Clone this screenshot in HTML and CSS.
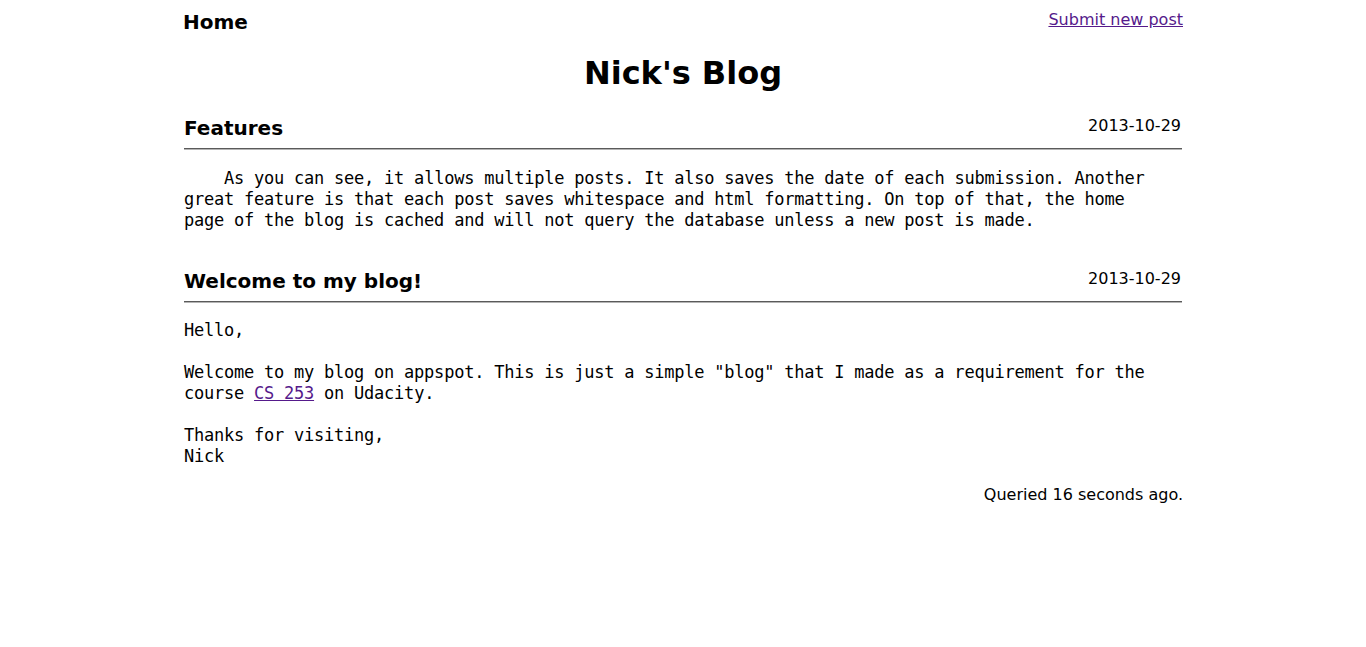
FILE: index.html
```html
<!DOCTYPE html>
<html lang="en">
<head>
<meta charset="utf-8">
<title>Nick's Blog</title>
<link rel="stylesheet" href="styles.css">
</head>
<body>
<div class="page">
  <div class="topbar">
    <a class="home" href="#">Home</a>
    <a class="submit" href="#">Submit new post</a>
  </div>
  <h1 class="blog-title">Nick's Blog</h1>

  <div class="post">
    <div class="post-head">
      <div class="post-title">Features</div>
      <div class="post-date">2013-10-29</div>
    </div>
    <hr class="post-rule">
    <pre class="post-body">    As you can see, it allows multiple posts. It also saves the date of each submission. Another great feature is that each post saves whitespace and html formatting. On top of that, the home page of the blog is cached and will not query the database unless a new post is made.</pre>
  </div>

  <div class="post">
    <div class="post-head">
      <div class="post-title">Welcome to my blog!</div>
      <div class="post-date">2013-10-29</div>
    </div>
    <hr class="post-rule">
    <pre class="post-body">Hello,

Welcome to my blog on appspot. This is just a simple "blog" that I made as a requirement for the course <a class="inline-link" href="#">CS 253</a> on Udacity.

Thanks for visiting,
Nick</pre>
  </div>

  <div class="footer">Queried 16 seconds ago.</div>
</div>
</body>
</html>
```

FILE: styles.css
```css
html, body {
  margin: 0;
  padding: 0;
  background: #ffffff;
}

body {
  font-family: "DejaVu Sans", sans-serif;
  font-size: 16px;
  color: #000000;
}

.page {
  width: 1000px;
  margin: 0 auto;
}

.topbar {
  display: flex;
  justify-content: space-between;
  align-items: flex-start;
  padding-top: 9px;
}

.home {
  font-size: 20px;
  font-weight: bold;
  color: #000000;
  text-decoration: none;
  margin-top: 1px;
}

.submit {
  font-size: 16px;
  color: #551a8b;
  text-decoration: underline;
  margin-top: 1px;
}

.blog-title {
  font-size: 32px;
  font-weight: bold;
  text-align: center;
  margin: 20px 0 0;
}

.post {
  margin: 23px 1px 0;
}

.post + .post {
  margin-top: 37.5px;
}

.post + .post .post-body {
  margin-top: 16.5px;
}

.post-head {
  display: flex;
  justify-content: space-between;
  align-items: flex-start;
}

.post-title {
  font-size: 20px;
  font-weight: bold;
  margin-top: 1px;
}

.post-date {
  font-size: 16px;
  padding-top: 1px;
  padding-right: 1px;
}

.post-rule {
  margin: 8px 0 0;
  height: 0;
  border: 0;
  border-top: 1px solid #5a5a5a;
  border-bottom: 1px solid #b4b4b4;
}

.post-body {
  font-family: "DejaVu Sans Mono", monospace;
  font-size: 17px;
  letter-spacing: -0.23px;
  line-height: 21px;
  white-space: pre-wrap;
  max-width: 975px;
  margin: 17.5px 0 0;
}

.inline-link {
  color: #551a8b;
  text-decoration: underline;
}

.footer {
  text-align: right;
  font-size: 16px;
  margin-top: 18.5px;
}
```
